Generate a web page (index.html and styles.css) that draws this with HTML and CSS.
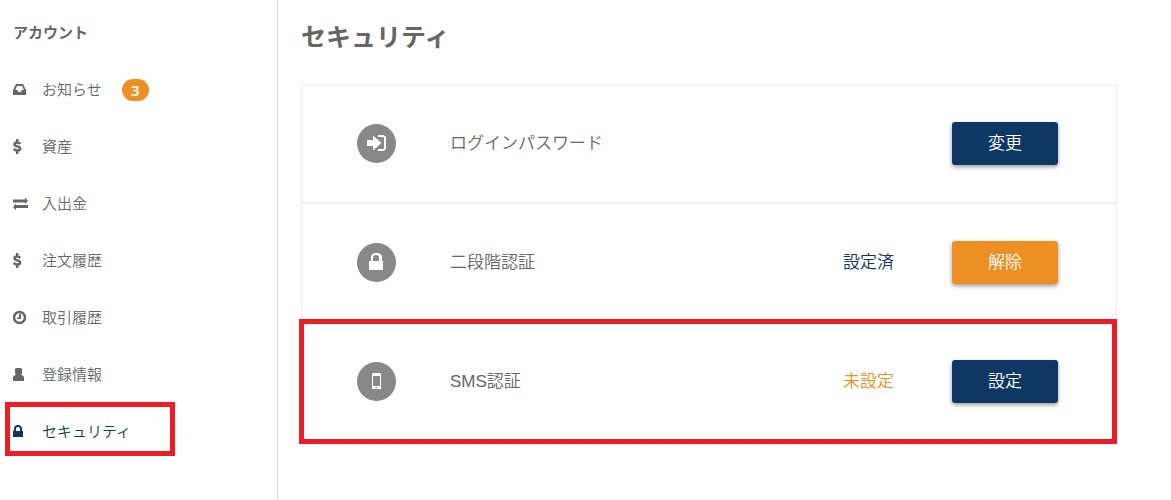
FILE: index.html
```html
<!DOCTYPE html>
<html lang="ja">
  <head>
    <meta charset="UTF-8" />
    <meta name="viewport" content="width=device-width, initial-scale=1" />
    <title>セキュリティ</title>
    <link rel="stylesheet" href="styles.css">
  </head>
  <body>
    <div class="layout">
      <nav class="sidebar">
        <div class="sidebar-title">アカウント</div>
        <ul class="sidebar-menu">
          <li>
            <a href="#news">
              <svg class="icon" viewBox="0 0 15 15"><path fill-rule="evenodd" d="M3 2h7l3 6v5H0V8zM4 4L2.300 8h2l1 2h2.500l1-2h2L9.200 4z"/></svg>
              <span class="name">お知らせ</span>
              <span class="badge">3</span>
            </a>
          </li>
          <li>
            <a href="#assets">
              <svg class="icon" viewBox="0 0 15 15"><path class="line" d="M7.300 5C6.500 4 5.400 3.400 4.200 3.400 2.700 3.400 1.500 4 1.500 5.200c0 2.800 5.600 1.500 5.600 4.300 0 1.300-1.200 2-2.800 2-1.400 0-2.600-.5-3.600-1.600M4.200 0v3.500M4.200 11.500V15"/></svg>
              <span class="name">資産</span>
            </a>
          </li>
          <li>
            <a href="#transfer">
              <svg class="icon" viewBox="0 0 15 15"><path d="M0 3.500h12V1.500l3 3.500-3 3V6.500H0zM15 9H3V7.500L0 11l3 3v-2h12z"/></svg>
              <span class="name">入出金</span>
            </a>
          </li>
          <li>
            <a href="#orders">
              <svg class="icon" viewBox="0 0 15 15"><path class="line" d="M7.300 5C6.500 4 5.400 3.400 4.200 3.400 2.700 3.400 1.500 4 1.500 5.200c0 2.800 5.600 1.500 5.600 4.300 0 1.300-1.200 2-2.800 2-1.400 0-2.600-.5-3.600-1.600M4.200 0v3.500M4.200 11.500V15"/></svg>
              <span class="name">注文履歴</span>
            </a>
          </li>
          <li>
            <a href="#trades">
              <svg class="icon" viewBox="0 0 15 15"><circle class="line" cx="6.500" cy="7.500" r="5.500"/><path d="M6 4h2v5H4V7.500h2z"/></svg>
              <span class="name">取引履歴</span>
            </a>
          </li>
          <li>
            <a href="#profile">
              <svg class="icon" viewBox="0 0 15 15"><path d="M3 1h5l1 1v4L8 8h1l2 2v4H0v-4l2-2h1L2 6V2z"/></svg>
              <span class="name">登録情報</span>
            </a>
          </li>
          <li class="active marked">
            <a href="#security">
              <svg class="icon" viewBox="0 0 15 15"><path fill-rule="evenodd" d="M0 7h1V5c0-2.500 1.500-4 4-4s4 1.500 4 4v2h1v6H0zM3 7h4V5c0-1.300-.7-2-2-2s-2 .7-2 2z"/></svg>
              <span class="name">セキュリティ</span>
            </a>
          </li>
        </ul>
      </nav>
      <main class="content">
        <h1>セキュリティ</h1>
        <section class="row">
          <svg class="round-icon" viewBox="0 0 39 39">
            <circle cx="19.500" cy="19.500" r="19.500"/>
            <path class="glyph" d="M10 16h6v-4.500l8.500 7.500-8.500 7.500V22h-6zM21 11h5.500l2.500 2v12l-2.500 2H21v-2h5l1-1V14l-1-1h-5z"/>
          </svg>
          <span class="label">ログインパスワード</span>
          <button type="button" class="button">変更</button>
        </section>
        <section class="row">
          <svg class="round-icon" viewBox="0 0 39 39">
            <circle cx="19.500" cy="19.500" r="19.500"/>
            <path class="glyph" fill-rule="evenodd" d="M12 18h2v-3.500c0-3 2-4.500 5.500-4.500s5.500 1.500 5.500 4.500V18h1v9H12zM16 18h6v-3.500c0-1.600-1-2.500-3-2.500s-3 .9-3 2.500z"/>
          </svg>
          <span class="label">二段階認証</span>
          <span class="status">設定済</span>
          <button type="button" class="button release-button">解除</button>
        </section>
        <section class="row marked">
          <svg class="round-icon" viewBox="0 0 39 39">
            <circle cx="19.500" cy="19.500" r="19.500"/>
            <path class="glyph" fill-rule="evenodd" d="M16 11h7l1 1v15h-9V12zM16 14v10h7V14zM18.500 25v1h2v-1z"/>
          </svg>
          <span class="label">SMS認証</span>
          <span class="status unset">未設定</span>
          <button type="button" class="button">設定</button>
        </section>
      </main>
    </div>
  </body>
</html>
```
FILE: styles.css
```css
*,
*::after {
  box-sizing: border-box;
}
body {
  margin: 0;
  background-color: #fff;
  color: #666;
  font-family: "Liberation Sans", "Noto Sans CJK JP", sans-serif;
  font-size: 17px;
  font-weight: 350;
}
.layout {
  display: flex;
  min-height: 100vh;
}
.sidebar {
  flex: none;
  width: 278px;
  border-right: 1px solid #ddd;
  font-size: 15px;
}
.sidebar-title {
  padding: 21px 13px 16px;
  line-height: 24px;
  font-weight: bold;
}
.sidebar-menu {
  list-style: none;
  margin: 0;
  padding: 0;
}
.sidebar-menu a {
  display: flex;
  align-items: center;
  height: 57px;
  padding-left: 13px;
  color: inherit;
  text-decoration: none;
}
.sidebar-menu .active {
  color: #0f3763;
}
.name {
  padding-bottom: 2px;
}
.icon {
  width: 15px;
  height: 15px;
  margin-right: 14px;
  fill: currentColor;
}
.icon .line {
  fill: none;
  stroke: currentColor;
  stroke-width: 2.5;
}
.badge {
  width: 27px;
  margin-left: 20px;
  border-radius: 11px;
  background-color: #ed8f22;
  color: #fff;
  font-family: "Noto Sans", sans-serif;
  font-weight: 600;
  line-height: 22px;
  text-align: center;
}
.content {
  flex: 1;
  padding: 18px 54px 0 23px;
}
h1 {
  margin: 0 0 28px;
  font-size: 25px;
  line-height: 38px;
}
.row {
  display: flex;
  align-items: center;
  height: 119px;
  padding: 0 58px 0 55px;
  border: 1px solid #eee;
}
.round-icon {
  width: 39px;
  height: 39px;
  margin-right: 54px;
  fill: #888;
}
.round-icon .glyph {
  fill: #fff;
}
.label,
.status {
  padding-bottom: 4px;
}
.label {
  flex: 1;
}
.status {
  margin-right: 58px;
  color: #0f3763;
}
.status.unset {
  color: #ed8f22;
}
.button {
  width: 106px;
  height: 43px;
  padding: 0 0 4px;
  border: none;
  border-radius: 3px;
  background-color: #0f3763;
  box-shadow: 0 2px 4px rgba(0, 0, 0, 0.4);
  color: #fff;
  font: inherit;
  cursor: pointer;
}
.release-button {
  background-color: #ed8f22;
}
/* red frames around the items to look at */
.marked {
  position: relative;
}
.marked::after {
  content: "";
  position: absolute;
  border: 5px solid #ee1c25;
  pointer-events: none;
}
.sidebar-menu .marked::after {
  top: -1px;
  left: 5px;
  width: 170px;
  height: 54px;
}
.row.marked::after {
  inset: -4px -1px -4px -3px;
}
```
